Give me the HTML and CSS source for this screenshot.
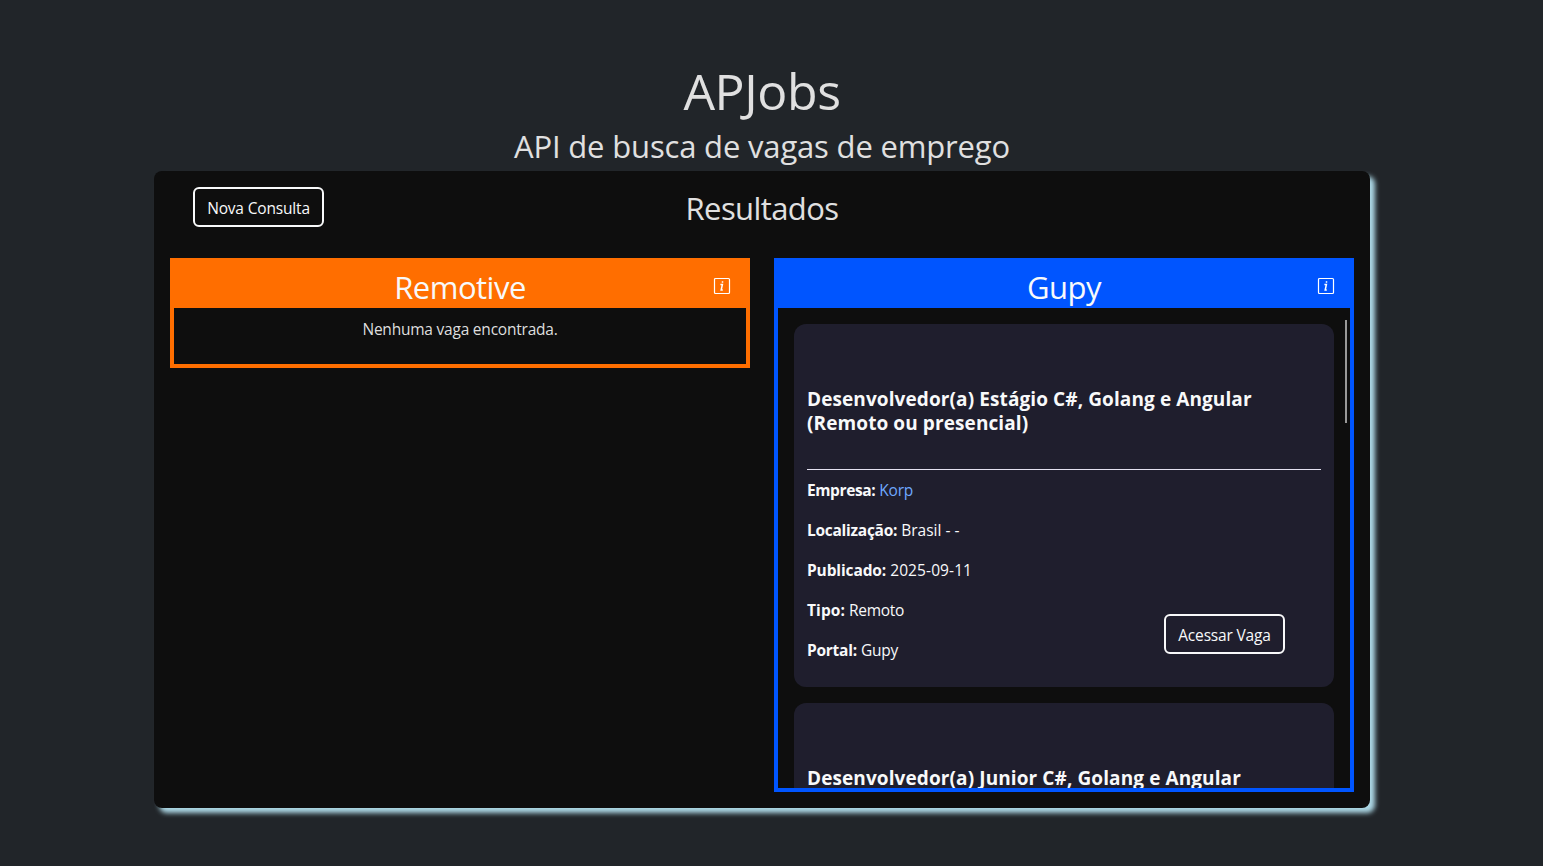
FILE: index.html
```html
<!DOCTYPE html>
<html lang="pt-BR">
<head>
<meta charset="utf-8">
<title>APJobs</title>
<link rel="stylesheet" href="styles.css">
</head>
<body>
<header class="page-header">
  <h1 class="brand">APJobs</h1>
  <h2 class="tagline">API de busca de vagas de emprego</h2>
</header>
<main class="results">
  <div class="results-bar">
    <button class="btn btn-new">Nova Consulta</button>
    <h2 class="results-title">Resultados</h2>
  </div>
  <div class="columns">
    <section class="portal portal-remotive">
      <div class="portal-head">
        <h2 class="portal-name">Remotive</h2>
        <svg class="info" viewBox="0 0 18 18"><rect x="1.5" y="1.5" width="15" height="15" rx="1"/><path class="info-i" d="M7.4 7.5h2L8.2 13h1.6M9.5 4.2v1.6"/></svg>
      </div>
      <p class="empty">Nenhuma vaga encontrada.</p>
    </section>
    <section class="portal portal-gupy">
      <div class="portal-head">
        <h2 class="portal-name">Gupy</h2>
        <svg class="info" viewBox="0 0 18 18"><rect x="1.5" y="1.5" width="15" height="15" rx="1"/><path class="info-i" d="M7.4 7.5h2L8.2 13h1.6M9.5 4.2v1.6"/></svg>
      </div>
      <div class="job-list">
        <article class="job">
          <h3 class="job-title">Desenvolvedor(a) Estágio C#, Golang e Angular<br>(Remoto ou presencial)</h3>
          <div class="job-body">
            <div class="job-facts">
              <p class="fact-company"><strong>Empresa:</strong> <a class="company">Korp</a></p>
              <p class="fact-place"><strong>Localização:</strong> <span>Brasil - -</span></p>
              <p class="fact-date"><strong>Publicado:</strong> <span>2025-09-11</span></p>
              <p class="fact-type"><strong>Tipo:</strong> <span>Remoto</span></p>
              <p class="fact-portal"><strong>Portal:</strong> <span>Gupy</span></p>
            </div>
            <button class="btn btn-open">Acessar Vaga</button>
          </div>
        </article>
        <article class="job">
          <h3 class="job-title">Desenvolvedor(a) Junior C#, Golang e Angular</h3>
        </article>
      </div>
      <span class="scroll-thumb"></span>
    </section>
  </div>
</main>
</body>
</html>
```
FILE: styles.css
```css
* { box-sizing: border-box; }
html { background: #212529; }
body {
  margin: 0;
  height: 866px;
  overflow: hidden;
  padding: 60px 173px 0 154px;
  background: #212529;
  color: #dee2e6;
  font: 400 15.5px/24px "Segoe UI", "Open Sans", "Noto Sans", sans-serif;
}
h1, h2, h3, p { margin: 0; font-weight: 400; }
.page-header { height: 111px; text-align: center; color: #e0e0e0; white-space: nowrap; }
.brand { font-size: 50px; line-height: 62px; letter-spacing: -0.4px; }
.tagline { font-size: 31px; line-height: 38px; margin-top: 5px; letter-spacing: -0.17px; }
.results {
  height: 637px;
  padding: 16px;
  border-radius: 8px;
  background: #0e0e0e;
  box-shadow: 5px 5px 5px #add8e6;
}
.results-bar {
  display: grid;
  grid-template-columns: 1fr auto 1fr;
  align-items: start;
  height: 71px;
  padding-left: 23px;
  padding-right: 23px;
}
.results-title { grid-column: 2; font-size: 31px; line-height: 38px; padding-top: 2px; letter-spacing: -0.6px; color: #e0e0e0; }
.btn {
  height: 40px;
  padding: 2px 0 0;
  border: 2px solid #f8f9fa;
  border-radius: 6px;
  background: transparent;
  color: #f8f9fa;
  font: inherit;
  letter-spacing: -0.17px;
  white-space: nowrap;
}
.btn-new { width: 131px; }
.columns { display: grid; grid-template-columns: 580px 580px; gap: 24px; align-items: start; }
.portal { position: relative; border: 4px solid; }
.portal-remotive { border-color: #ff6e00; height: 110px; }
.portal-gupy { border-color: #0055ff; height: 534px; }
.portal-head { position: relative; height: 46px; text-align: center; color: #f8f9fa; }
.portal-remotive .portal-head { background: #ff6e00; }
.portal-gupy .portal-head { background: #0055ff; }
.portal-name { font-size: 31px; line-height: 38px; padding-top: 6px; letter-spacing: -0.5px; }
.info {
  position: absolute;
  top: 15px;
  right: 15px;
  width: 18px;
  height: 18px;
  fill: none;
  stroke: #fff;
  stroke-width: 1.2;
}
.info-i { stroke-width: 1.5; }
.empty { padding-top: 9px; text-align: center; letter-spacing: -0.22px; color: #dedede; }
.job-list { height: 480px; padding: 16px; overflow: hidden; }
.job {
  height: 363px;
  margin-bottom: 16px;
  padding: 63px 13px 0;
  border-radius: 12px;
  background: #1f1e2d;
  color: #f8f9fa;
}
.job-title { height: 82px; font-size: 19px; line-height: 24px; font-weight: 700; letter-spacing: 0.1px; white-space: nowrap; }
.job-body { display: flex; justify-content: space-between; border-top: 1px solid #e4e1f0; }
.job-facts { padding-top: 8px; display: flex; flex-direction: column; gap: 16px; }
.job-facts strong { font-weight: 700; }
.fact-company strong { letter-spacing: -0.4px; }
.fact-place strong { letter-spacing: -0.27px; }
.fact-date strong { letter-spacing: -0.12px; }
.fact-date span { letter-spacing: 0.1px; }
.fact-type strong { letter-spacing: 0.1px; }
.fact-type span { letter-spacing: -0.3px; }
.fact-portal strong { letter-spacing: -0.25px; }
.fact-portal span { letter-spacing: -0.2px; }
.company { color: #6ea8fe; letter-spacing: -0.2px; }
.btn-open { width: 121px; margin: 144px 36px 0 0; }
.scroll-thumb {
  position: absolute;
  top: 58px;
  right: 3px;
  width: 2px;
  height: 103px;
  background: #999;
}
```
